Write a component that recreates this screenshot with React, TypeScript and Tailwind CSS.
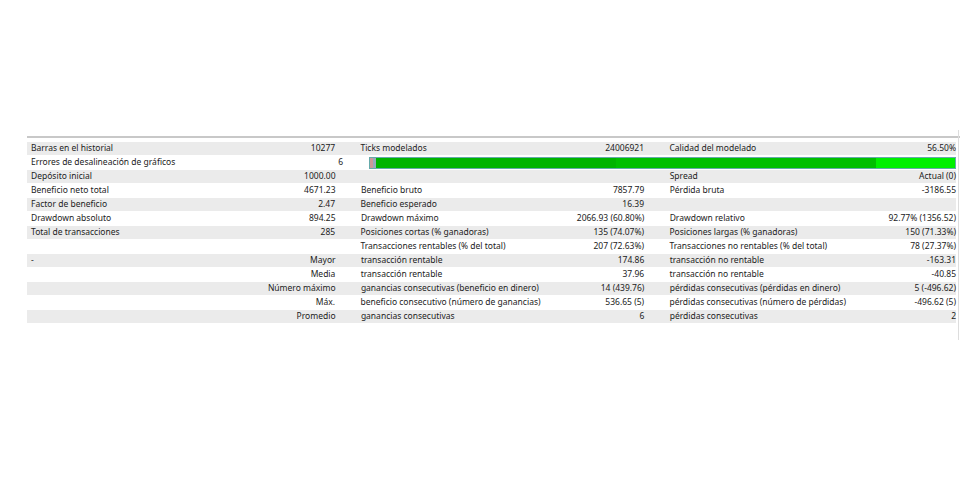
const rows: [string,string,string,string,string,string][] = [
["Barras en el historial","10277","Ticks modelados","24006921","Calidad del modelado","56.50%"],
["Errores de desalineación de gráficos","6","BAR","","",""],
["Depósito inicial","1000.00","","","Spread","Actual (0)"],
["Beneficio neto total","4671.23","Beneficio bruto","7857.79","Pérdida bruta","-3186.55"],
["Factor de beneficio","2.47","Beneficio esperado","16.39","",""],
["Drawdown absoluto","894.25","Drawdown máximo","2066.93 (60.80%)","Drawdown relativo","92.77% (1356.52)"],
["Total de transacciones","285","Posiciones cortas (% ganadoras)","135 (74.07%)","Posiciones largas (% ganadoras)","150 (71.33%)"],
["","","Transacciones rentables (% del total)","207 (72.63%)","Transacciones no rentables (% del total)","78 (27.37%)"],
["-","Mayor","transacción rentable","174.86","transacción no rentable","-163.31"],
["","Media","transacción rentable","37.96","transacción no rentable","-40.85"],
["","Número máximo","ganancias consecutivas (beneficio en dinero)","14 (439.76)","pérdidas consecutivas (pérdidas en dinero)","5 (-496.62)"],
["","Máx.","beneficio consecutivo (número de ganancias)","536.65 (5)","pérdidas consecutivas (número de pérdidas)","-496.62 (5)"],
["","Promedio","ganancias consecutivas","6","pérdidas consecutivas","2"],
];
export default function App(){
return <div className="w-[960px] h-[504px] bg-white relative text-[8.5px] text-[#222]" style={{fontFamily:'"Noto Sans", "Open Sans", sans-serif'}}>
<div className="pt-[136px] pl-[27px]">
<div className="h-[2px] bg-[#c8c8c8] w-[933px]"></div>
<div className="h-[4px]"></div>
<div className="w-[929px] flex flex-col">
{rows.map((r,i)=>(
<div key={i} className={`flex h-[14px] items-center border-b border-white ${i%2===0?'bg-[#ebebeb]':'bg-white'}`}>
<div className="w-[291px] pl-[4px] truncate">{r[0]}</div>
<div className="w-[25px] text-right whitespace-nowrap flex justify-end">{r[1]}</div>
{r[2]==="BAR" ? (
<div className="ml-[26px] flex-1 h-[12px] flex border border-[#6aa] ">
<div className="w-[3px] bg-[#c99]"></div><div className="w-[3px] bg-[#9ab]"></div>
<div className="w-[240px] bg-[#00b400]"></div>
<div className="w-[260px] bg-[#00bf00]"></div>
<div className="flex-1 bg-[#00f000]"></div>
</div>
) : <>
<div className="w-[26px]"></div>
<div className="w-[200px] whitespace-nowrap">{r[2]}</div>
<div className="w-[91px] text-right whitespace-nowrap">{r[3]}</div>
<div className="w-[26px]"></div>
<div className="w-[200px] whitespace-nowrap">{r[4]}</div>
<div className="w-[94px] text-right whitespace-nowrap">{r[5]}</div>
</>}
</div>))}
</div>
</div>
<div className="absolute right-[1px] top-[130px] h-[210px] w-[1px] bg-[#ddd]"></div>
</div>
}
